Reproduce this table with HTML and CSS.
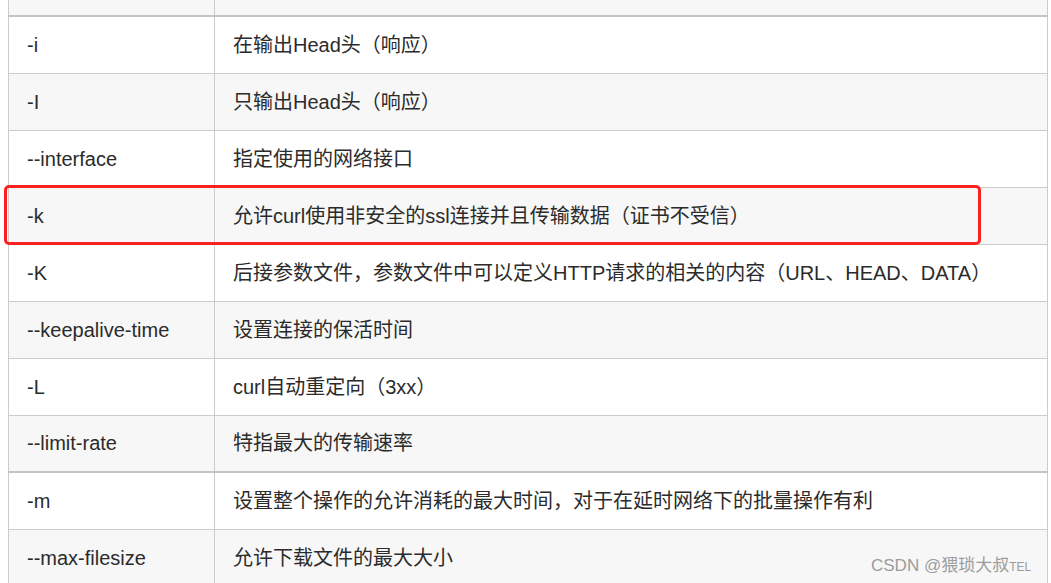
FILE: index.html
```html
<!DOCTYPE html>
<html lang="zh-CN">
<head>
    <meta charset="UTF-8">
    <meta name="viewport" content="width=device-width, initial-scale=1.0">
    <title>curl 参数</title>
    <link rel="stylesheet" href="styles.css">
</head>
<body>
    <div class="page">
        <table class="opts">
            <thead>
                <tr><th class="opt"></th><th></th></tr>
            </thead>
            <tbody>
                <tr><td class="opt">-i</td><td>在输出Head头（响应）</td></tr>
                <tr><td class="opt">-I</td><td>只输出Head头（响应）</td></tr>
                <tr><td class="opt">--interface</td><td>指定使用的网络接口</td></tr>
                <tr><td class="opt">-k</td><td>允许curl使用非安全的ssl连接并且传输数据（证书不受信）</td></tr>
                <tr><td class="opt">-K</td><td>后接参数文件，参数文件中可以定义HTTP请求的相关的内容（URL、HEAD、DATA）</td></tr>
                <tr><td class="opt">--keepalive-time</td><td>设置连接的保活时间</td></tr>
                <tr><td class="opt">-L</td><td>curl自动重定向（3xx）</td></tr>
                <tr><td class="opt">--limit-rate</td><td>特指最大的传输速率</td></tr>
                <tr class="group"><td class="opt">-m</td><td>设置整个操作的允许消耗的最大时间，对于在延时网络下的批量操作有利</td></tr>
                <tr><td class="opt">--max-filesize</td><td>允许下载文件的最大大小</td></tr>
            </tbody>
        </table>

        <!-- highlight drawn over the -k row -->
        <div class="mark"></div>

        <div class="watermark">CSDN @猥琐大叔<span class="tel">TEL</span></div>
    </div>
</body>
</html>
```

FILE: styles.css
```css
body {
    margin: 0;
    font-family: "Liberation Sans", "Noto Sans CJK SC", sans-serif;
    color: #2b2b2b;
    background-color: #fff;
    overflow: hidden;
}
.page {
    position: relative;
    padding-left: 8px;
}
.opts {
    border-collapse: collapse;
    width: 1040px;
    font-size: 20px;
    table-layout: fixed;
}
.opts th,
.opts td {
    border: 1px solid #ccc;
    text-align: left;
    padding: 0 18px;
    line-height: 24px;
}
.opts th {
    height: 15px;
    padding: 0;
    background-color: #f7f7f7;
    border-top: none;
    border-bottom: 2px solid #c4c4c4;
}
.opts td {
    height: 57px;
    box-sizing: border-box;
}
.opts .opt {
    width: 205px;
}
.opts tbody tr:nth-child(even) {
    background-color: #f7f7f7;
}
.opts tr.group td {
    border-top: 2px solid #c4c4c4;
}
.mark {
    position: absolute;
    left: 4px;
    top: 185px;
    width: 971px;
    height: 54px;
    border: 3px solid #fb2121;
    border-radius: 5px;
}
.watermark {
    position: absolute;
    left: 871px;
    top: 551px;
    font-size: 17px;
    color: #9c9c9c;
    white-space: nowrap;
}
.watermark .tel {
    font-size: 12px;
}
```
